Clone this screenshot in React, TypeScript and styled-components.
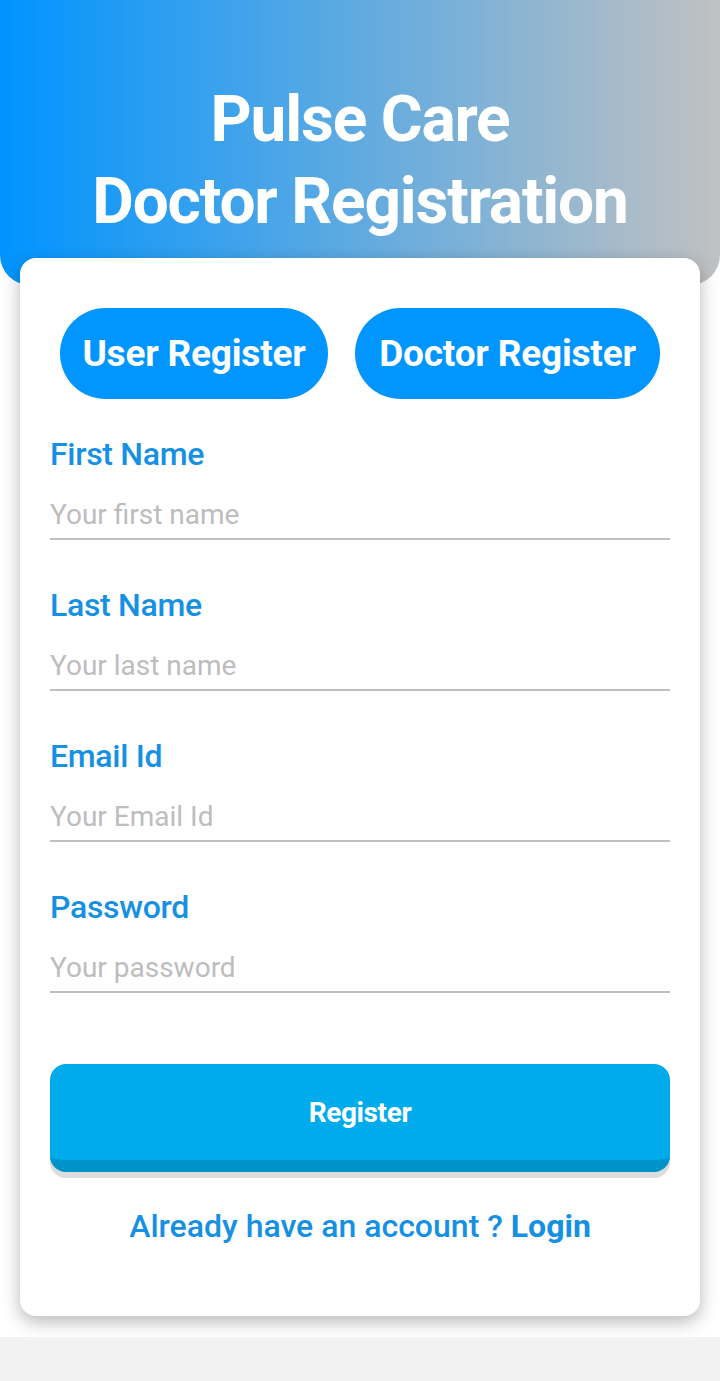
import React from "react";
import styled, { createGlobalStyle } from "styled-components";

const Global = createGlobalStyle`
  html, body { margin: 0; padding: 0; background: #f2f2f2; }
  body { font-family: Roboto, "Noto Sans", Arial, sans-serif; }
  * { box-sizing: border-box; }
`;

const Screen = styled.div`
  height: 1337px;
  background: #ffffff;
  overflow: hidden;
  display: flex;
  flex-direction: column;
`;

const Header = styled.header`
  height: 285px;
  flex-shrink: 0;
  background: linear-gradient(to right, #0094ff 0%, #c1c1c1 100%);
  border-radius: 0 0 30px 30px;
  display: flex;
  flex-direction: column;
  align-items: center;
  padding-top: 79px;
`;

const Title = styled.h1`
  margin: 0;
  color: #ffffff;
  font-family: Roboto, Arial, sans-serif;
  font-weight: 700;
  font-size: 64px;
  line-height: 82px;
  letter-spacing: -1.2px;
  text-align: center;
`;

const Card = styled.main`
  margin: -27px 20px 0;
  height: 1058px;
  background: #ffffff;
  border-radius: 16px;
  box-shadow: 0 6px 18px rgba(0, 0, 0, 0.28);
  padding: 50px 30px 0;
  display: flex;
  flex-direction: column;
`;

const ToggleRow = styled.div`
  display: flex;
  justify-content: center;
  gap: 27px;
`;

const Pill = styled.button<{ $width: number }>`
  width: ${(p) => p.$width}px;
  height: 91px;
  border: none;
  border-radius: 46px;
  background: #0095ff;
  color: #ffffff;
  font-family: Roboto, Arial, sans-serif;
  font-weight: 700;
  font-size: 37px;
  letter-spacing: -0.2px;
  padding: 0;
  white-space: nowrap;
`;

const Fields = styled.div`
  display: flex;
  flex-direction: column;
  padding-top: 38px;
`;

const Field = styled.div`
  display: flex;
  flex-direction: column;
  height: 151px;
`;

const Label = styled.label`
  color: #1690e3;
  font-family: Roboto, Arial, sans-serif;
  font-weight: 500;
  font-size: 32px;
  line-height: 34px;
  letter-spacing: -0.3px;
`;

const Input = styled.input`
  margin-top: 25px;
  height: 44px;
  border: none;
  border-bottom: 2px solid #bfbfbf;
  outline: none;
  background: transparent;
  padding: 0 0 6px;
  font-family: Roboto, Arial, sans-serif;
  font-size: 28px;
  color: #333;
  &::placeholder { color: #bdbdbd; }
`;

const RegisterButton = styled.button`
  margin-top: 23px;
  height: 108px;
  flex-shrink: 0;
  border: none;
  border-bottom: 12px solid #0093c9;
  border-radius: 16px;
  background: #00abeb;
  box-shadow: 0 6px 0 #dcdcdc;
  color: #ffffff;
  font-family: Roboto, Arial, sans-serif;
  font-weight: 700;
  font-size: 28px;
  letter-spacing: -0.4px;
`;

const Footer = styled.p`
  margin: 36px 0 0;
  text-align: center;
  color: #1690e3;
  font-family: Roboto, Arial, sans-serif;
  font-weight: 500;
  font-size: 32px;
  line-height: 37px;
`;

const LoginLink = styled.a`
  font-weight: 700;
  color: #1690e3;
`;

export default function App() {
  return (
    <>
      <Global />
      <Screen>
        <Header>
          <Title>
            Pulse Care
            <br />
            Doctor Registration
          </Title>
        </Header>
        <Card>
          <ToggleRow>
            <Pill $width={268}>User Register</Pill>
            <Pill $width={305}>Doctor Register</Pill>
          </ToggleRow>
          <Fields>
            <Field>
              <Label>First Name</Label>
              <Input placeholder="Your first name" />
            </Field>
            <Field>
              <Label>Last Name</Label>
              <Input placeholder="Your last name" />
            </Field>
            <Field>
              <Label>Email Id</Label>
              <Input placeholder="Your Email Id" />
            </Field>
            <Field>
              <Label>Password</Label>
              <Input placeholder="Your password" type="password" />
            </Field>
          </Fields>
          <RegisterButton>Register</RegisterButton>
          <Footer>
            Already have an account ? <LoginLink>Login</LoginLink>
          </Footer>
        </Card>
      </Screen>
    </>
  );
}
